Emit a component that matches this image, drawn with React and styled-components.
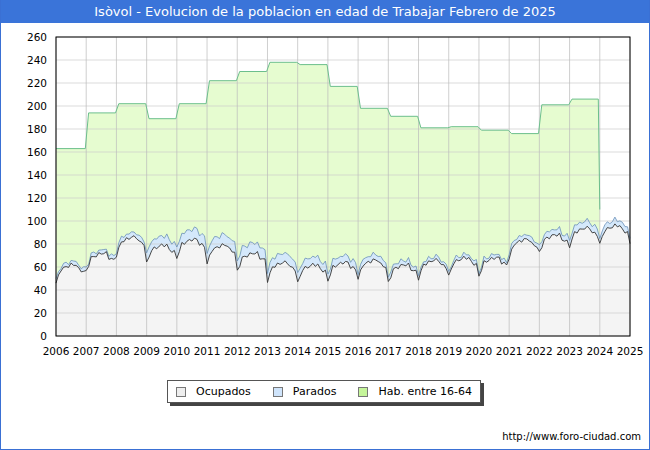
import React from 'react'
import styled, { createGlobalStyle } from 'styled-components'

const Global = createGlobalStyle`
  body { margin: 0; font-family: "DejaVu Sans", Verdana, sans-serif; }
`

const Frame = styled.div`
  width: 650px;
  height: 450px;
  box-sizing: border-box;
  border: 1px solid #3a70d4;
  border-top: none;
  background: #fff;
  display: flex;
  flex-direction: column;
`

const TitleBar = styled.div`
  height: 23px;
  background: #3a74d9;
  color: #fff;
  font-size: 13px;
  display: flex;
  align-items: center;
  justify-content: center;
`

const Legend = styled.div`
  align-self: center;
  margin: 12px 0 0 -2px;
  display: flex;
  gap: 22px;
  align-items: center;
  padding: 4px 8px;
  border: 1px solid #555;
  box-shadow: 3px 3px 0 #444;
  font-size: 11px;
  background: #fff;
`

const Item = styled.div`
  display: flex;
  align-items: center;
  gap: 10px;
`

const Swatch = styled.span`
  width: 8px;
  height: 8px;
  border: 1px solid #777;
  background: ${p => p.$c};
`

const Url = styled.div`
  align-self: flex-end;
  margin: 28px 8px 0 0;
  font-size: 10px;
`

const X0 = 55, X1 = 629, Y0 = 313, Y1 = 14
const xs = y => X0 + (y - 2006) * (X1 - X0) / 19
const ys = v => Y0 - v * (Y0 - Y1) / 260

const hab = [163, 194, 202, 189, 202, 222, 230, 238, 236, 217, 198, 191, 181, 182, 179, 176, 201, 206]
const base = [58, 68, 82, 75, 80, 75, 68, 60, 58, 60, 62, 58, 62, 64, 64, 80, 84, 90, 92]
const gap = [3, 3, 4, 8, 9, 9, 9, 8, 7, 6, 5, 4, 3, 3, 3, 4, 5, 6, 5]

const occ = [], par = []
for (let m = 0; m <= 19 * 12; m++) {
  const y = Math.min(18, Math.floor(m / 12))
  const mm = m % 12
  const season = mm === 0 ? -12 : mm === 1 ? -6 : mm < 6 ? -2 + mm : mm < 9 ? 4 : 1 - (mm - 8)
  const wig = Math.sin(m * 2.3) * 1.5
  const o = base[y] + season + wig
  occ.push([2006 + m / 12, o])
  par.push([2006 + m / 12, o + gap[y] + Math.cos(m * 1.7)])
}

const area = pts => `M${xs(pts[0][0])},${Y0} ` + pts.map(p => `L${xs(p[0]).toFixed(1)},${ys(p[1]).toFixed(1)}`).join(' ') + ` L${xs(pts[pts.length - 1][0])},${Y0} Z`
const line = pts => pts.map((p, i) => `${i ? 'L' : 'M'}${xs(p[0]).toFixed(1)},${ys(p[1]).toFixed(1)}`).join(' ')

const habPts = []
hab.forEach((v, i) => {
  habPts.push([2006 + i + (i ? 0.08 : 0), v])
  habPts.push([2006 + i + 0.97, v])
})
habPts[habPts.length - 1] = [2023.95, 206]
habPts.push([2024, 110])
const habArea = `M${X0},${Y0} ` + habPts.map(p => `L${xs(p[0]).toFixed(1)},${ys(p[1]).toFixed(1)}`).join(' ') + ` L${xs(2024)},${Y0} Z`

function Chart() {
  const vals = Array.from({ length: 14 }, (_, i) => i * 20)
  const years = Array.from({ length: 20 }, (_, i) => 2006 + i)
  return (
    <svg width="650" height="345" style={{ display: 'block' }}>
      <text x="325" y="290" textAnchor="middle" fontSize="28" fill="#eef0f8" fontFamily="DejaVu Sans">FORO-CIUDAD.COM</text>
      <path d={habArea} fill="#e6fcd0" />
      <path d={area(par)} fill="#d4e8fb" />
      <path d={area(occ)} fill="#f4f4f4" />
      {vals.map(v => <line key={v} x1={X0} x2={X1} y1={ys(v)} y2={ys(v)} stroke="#ccc" strokeOpacity="0.7" />)}
      {years.map(y => <line key={y} x1={xs(y)} x2={xs(y)} y1={Y1} y2={Y0} stroke="#bbb" strokeOpacity="0.7" />)}
      <path d={line(habPts)} fill="none" stroke="#6cbf8c" />
      <path d={line(par)} fill="none" stroke="#6a8fb8" strokeWidth="0.8" />
      <path d={line(occ)} fill="none" stroke="#333" strokeWidth="0.9" />
      <rect x={X0} y={Y1} width={X1 - X0} height={Y0 - Y1} fill="none" stroke="#000" />
      {vals.map(v => <text key={v} x="46" y={ys(v) + 4} textAnchor="end" fontSize="10.5">{v}</text>)}
      {years.map(y => <text key={y} x={xs(y)} y={Y0 + 19} textAnchor="middle" fontSize="10.5">{y}</text>)}
    </svg>
  )
}

export default function App() {
  return (
    <>
      <Global />
      <Frame>
        <TitleBar>Isòvol - Evolucion de la poblacion en edad de Trabajar Febrero de 2025</TitleBar>
        <Chart />
        <Legend>
          <Item><Swatch $c="#eee" />Ocupados</Item>
          <Item><Swatch $c="#cfe4fb" />Parados</Item>
          <Item><Swatch $c="#c5f59a" />Hab. entre 16-64</Item>
        </Legend>
        <Url>http://www.foro-ciudad.com</Url>
      </Frame>
    </>
  )
}
